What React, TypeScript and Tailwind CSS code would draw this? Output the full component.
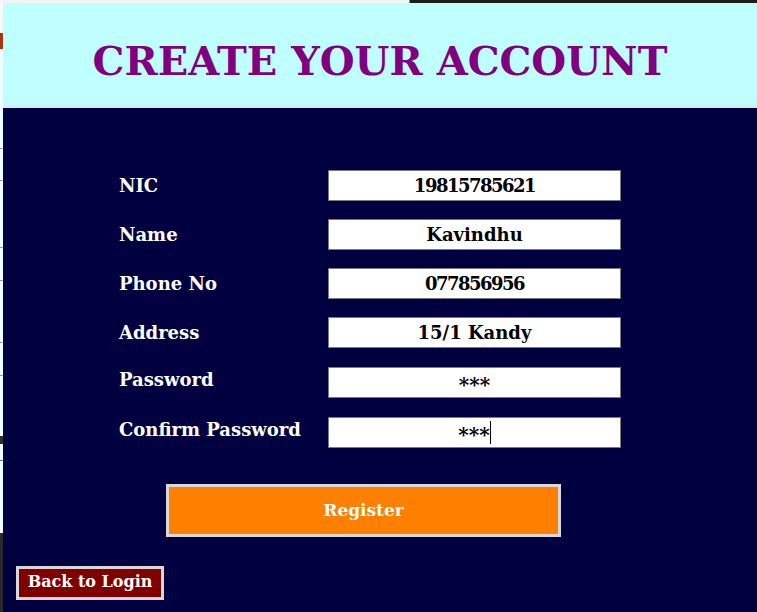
import React from 'react';

const fields = [
    { label: "NIC", value: "19815785621", row: "", num: true },
    { label: "Name", value: "Kavindhu", row: "" },
    { label: "Phone No", value: "077856956", row: "", num: true },
    { label: "Address", value: "15/1 Kandy", row: "" },
    { label: "Password", value: "***", row: "mt-px", secret: true },
    { label: "Confirm Password", value: "***", row: "mt-px", secret: true, caret: true }
];

export default function App() {
    return (
        <div className="w-[757px] h-[612px] overflow-hidden flex flex-col bg-[#000040] font-['DejaVu_Serif',serif] font-bold">
            {/* strip of the window behind */}
            <div className="h-[3px] flex shrink-0">
                <div className="w-[409px] bg-[#f4f4f4]"></div>
                <div className="w-px bg-[#8a8a8a]"></div>
                <div className="flex-1 bg-[#1c1c1c]"></div>
            </div>

            <div className="flex flex-1">
                <div className="w-[3px] flex flex-col shrink-0 bg-[#eefefe]">
                    <div className="h-[30px] bg-[#f8f8f8]"></div>
                    <div className="h-[16px] bg-[#b03010]"></div>
                    <div className="h-[99px]"></div>
                    <div className="h-px bg-[#9a9a9a]"></div>
                    <div className="h-[31px]"></div>
                    <div className="h-px bg-[#9a9a9a]"></div>
                    <div className="h-[66px]"></div>
                    <div className="h-px bg-[#9a9a9a]"></div>
                    <div className="h-[32px]"></div>
                    <div className="h-px bg-[#9a9a9a]"></div>
                    <div className="h-[61px]"></div>
                    <div className="h-px bg-[#9a9a9a]"></div>
                    <div className="h-[32px]"></div>
                    <div className="h-px bg-[#9a9a9a]"></div>
                    <div className="h-[60px]"></div>
                    <div className="h-[8px] bg-[#30302a]"></div>
                    <div className="h-[16px]"></div>
                    <div className="h-px bg-[#2a8a4a]"></div>
                    <div className="h-[72px]"></div>
                    <div className="flex-1 bg-[#2a2a2a]"></div>
                </div>

                <div className="flex-1 flex flex-col">
                    <div className="h-[102px] bg-[#c0ffff] flex items-center justify-center pt-[14px] shrink-0">
                        <h1 className="text-[40px] leading-none text-[#800080]">CREATE YOUR ACCOUNT</h1>
                    </div>
                    <div className="h-[3px] bg-[#e6e6e6] shrink-0"></div>

                    <div className="flex-1 flex flex-col pt-[62px]">
                        <div className="flex flex-col gap-[18px] pl-[116px]">
                            {fields.map((f) => (
                                <div key={f.label} className={`flex items-center ${f.row}`}>
                                    <div className={`w-[209px] text-[18px] text-white ${f.secret ? "-mt-[6px]" : ""}`}>{f.label}</div>
                                    <div className="w-[293px] h-[31px] bg-white border border-[#7a7a7a] flex items-center justify-center text-[18px] text-black">
                                        <span className={f.secret ? "text-[20px] pt-[4px]" : f.num ? "tracking-[-1.5px]" : ""}>{f.value}</span>
                                        {f.caret && <span className="w-px h-[23px] bg-black"></span>}
                                    </div>
                                </div>
                            ))}
                        </div>

                        <div className="pl-[163px] mt-[36px]">
                            <button className="w-[395px] h-[53px] bg-[#ff8000] border-[3px] border-[#d8d8d8] text-white text-[17px]">
                                Register
                            </button>
                        </div>

                        <div className="pl-[13px] mt-[29px]">
                            <button className="w-[148px] h-[34px] bg-[#800000] border-[3px] border-[#d8d8d8] text-white text-[16px] pb-[3px]">
                                Back to Login
                            </button>
                        </div>
                    </div>
                </div>
            </div>
        </div>
    );
}
